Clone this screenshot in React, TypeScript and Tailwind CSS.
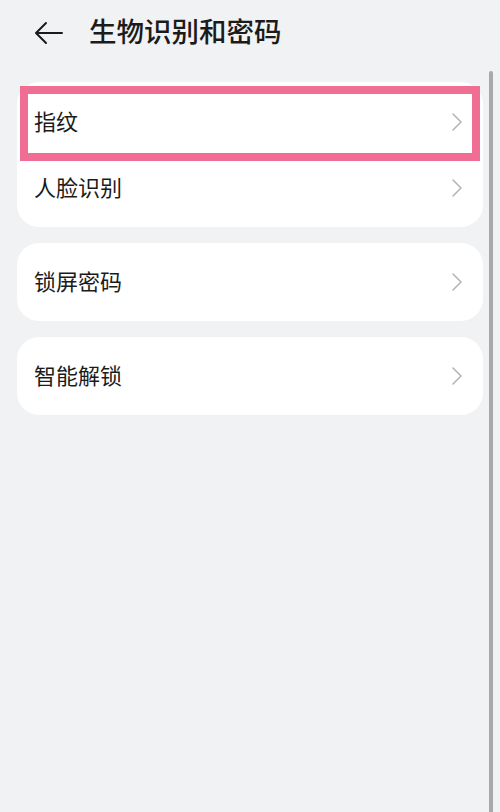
import React from "react";

const Chevron = () => (
  <svg width="12" height="20" viewBox="0 0 12 20" fill="none" className="shrink-0">
    <path d="M2 2 L10 10 L2 18" stroke="#b5b5b7" strokeWidth="1.6" strokeLinecap="round" strokeLinejoin="round" />
  </svg>
);

const Row = ({ label }: { label: string }) => (
  <div className="flex h-[66px] items-center justify-between pl-[17px] pr-[20px]">
    <span className="mb-[4px] text-[22px] leading-none text-[#1b1b1b]">{label}</span>
    <Chevron />
  </div>
);

export default function App() {
  return (
    <div
      className="relative h-[812px] w-[500px] overflow-hidden bg-[#f1f2f4]"
      style={{ fontFamily: '"Noto Sans CJK SC", "Noto Sans", sans-serif' }}
    >
      <div className="flex h-[66px] items-center pl-[34px]">
        <svg width="30" height="24" viewBox="0 0 30 24" fill="none">
          <path d="M28 12 H3 M12 2 L2 12 L12 22" stroke="#1b1b1b" strokeWidth="2" strokeLinecap="round" strokeLinejoin="round" />
        </svg>
        <span className="mb-[4px] ml-[25px] text-[27.5px] font-medium leading-none text-[#1b1b1b]">生物识别和密码</span>
      </div>

      <div className="flex flex-col gap-[16px] pl-[17px] pr-[17px] pt-[16px]">
        <div className="relative rounded-[22px] bg-white pb-[6px] pt-[7px]">
          <Row label="指纹" />
          <Row label="人脸识别" />
          <div className="absolute left-[3px] top-[4px] h-[75px] w-[460px] border-[8px] border-[#f06e94]" />
        </div>
        <div className="rounded-[22px] bg-white py-[6px]">
          <Row label="锁屏密码" />
        </div>
        <div className="rounded-[22px] bg-white py-[6px]">
          <Row label="智能解锁" />
        </div>
      </div>

      <div className="absolute right-[7px] top-[71px] h-[760px] w-[4px] rounded-full bg-[#a9a9ab]" />
    </div>
  );
}
